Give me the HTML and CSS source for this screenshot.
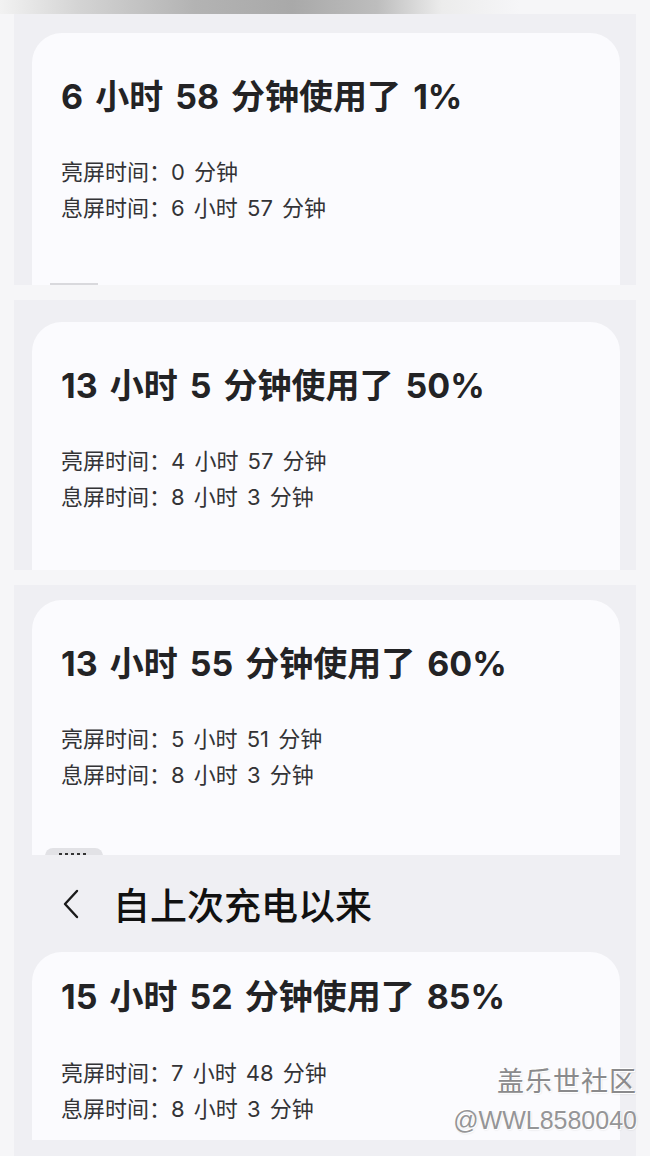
FILE: index.html
```html
<!DOCTYPE html>
<html lang="zh-CN">
<head>
    <meta charset="UTF-8">
    <meta name="viewport" content="width=device-width, initial-scale=1.0">
    <title>电池使用情况</title>
    <link rel="stylesheet" href="styles.css">
</head>
<body>
    <div class="top-blur"></div>

    <!-- Ảnh 1 -->
    <div class="shot shot-1">
        <div class="card">
            <h2 class="usage-title">6 小时 58 分钟使用了 1%</h2>
            <p class="usage-line">亮屏时间：0 分钟</p>
            <p class="usage-line">息屏时间：6 小时 57 分钟</p>
        </div>
        <span class="tab-line"></span>
    </div>

    <div class="shot shot-2">
        <div class="card">
            <h2 class="usage-title">13 小时 5 分钟使用了 50%</h2>
            <p class="usage-line">亮屏时间：4 小时 57 分钟</p>
            <p class="usage-line">息屏时间：8 小时 3 分钟</p>
        </div>
    </div>

    <div class="shot shot-3">
        <div class="card">
            <h2 class="usage-title">13 小时 55 分钟使用了 60%</h2>
            <p class="usage-line">亮屏时间：5 小时 51 分钟</p>
            <p class="usage-line">息屏时间：8 小时 3 分钟</p>
        </div>
        <span class="tab-pill"><span class="tab-marks"></span></span>
    </div>

    <div class="shot shot-4">
        <div class="page-header">
            <svg class="back-icon" width="18" height="30" viewBox="0 0 18 30">
                <polyline points="15,2 3,15 15,28" fill="none" stroke="#1a1a1a" stroke-width="2.4" stroke-linecap="round" stroke-linejoin="round"/>
            </svg>
            <span class="page-title">自上次充电以来</span>
        </div>
        <div class="card">
            <h2 class="usage-title">15 小时 52 分钟使用了 85%</h2>
            <p class="usage-line">亮屏时间：7 小时 48 分钟</p>
            <p class="usage-line">息屏时间：8 小时 3 分钟</p>
        </div>
    </div>

    <div class="watermark">
        <div class="wm-name">盖乐世社区</div>
        <div class="wm-user">@WWL8580040</div>
    </div>
</body>
</html>
```

FILE: styles.css
```css
body {
    margin: 0;
    background-color: #f6f6f8;
    font-family: Inter, "Noto Sans CJK SC", sans-serif;
    color: #1f1f21;
    position: relative;
}
.top-blur {
    height: 14px;
    background: linear-gradient(to right, #f2f2f2 0, #d4d4d4 12%, #b3b3b3 30%, #a9a9a9 45%, #bdbdbd 58%, #ececec 68%, #f6f6f8 80%);
}
/* mỗi ảnh chụp màn hình */
.shot {
    position: relative;
    margin: 0 14px;
    padding: 0 16px 0 18px;
    background-color: #efeff3;
    overflow: hidden;
}
.shot-1 { height: 271px; padding-top: 19px; box-sizing: border-box; margin-bottom: 15px; }
.shot-2 { height: 270px; padding-top: 22px; box-sizing: border-box; margin-bottom: 15px; }
.shot-3 { height: 270px; padding-top: 15px; box-sizing: border-box; }
.shot-4 { height: 301px; box-sizing: border-box; }

.card {
    background-color: #fbfbfe;
    border-radius: 30px 30px 0 0;
    padding: 44px 20px 0 29px;
    height: 100%;
    box-sizing: border-box;
}
.shot-4 .card {
    height: 188px;
    padding-top: 25px;
}
.usage-title {
    margin: 0 0 37px;
    font-size: 34px;
    line-height: 40px;
    font-weight: 700;
    word-spacing: 4px;
    color: #232325;
}
.shot-4 .usage-title {
    margin-bottom: 38px;
}
.usage-line {
    margin: 0;
    font-size: 22px;
    line-height: 36px;
    word-spacing: 3px;
    color: #333336;
}
.tab-line {
    position: absolute;
    left: 36px;
    bottom: 0;
    width: 48px;
    height: 2px;
    background-color: #d9d9dd;
}
.tab-pill {
    position: absolute;
    left: 31px;
    top: 263px;
    width: 58px;
    height: 16px;
    border-radius: 8px;
    background-color: #e2e2e6;
}
.tab-marks {
    position: absolute;
    left: 14px;
    top: 5px;
    width: 30px;
    height: 2px;
    background: repeating-linear-gradient(to right, #333 0, #333 3px, transparent 3px, transparent 6px);
}
.page-header {
    display: flex;
    align-items: center;
    height: 97px;
    padding-left: 30px;
}
.back-icon {
    flex: none;
}
.page-title {
    margin-left: 33px;
    font-size: 37px;
    font-weight: 500;
    color: #111;
}
.watermark {
    position: absolute;
    right: 13px;
    top: 1064px;
    text-align: right;
    color: #8a8a8c;
    text-shadow: 1px 1px 0 #fff, -1px -1px 0 #fff, 1px 1px 2px rgba(0, 0, 0, 0.15);
}
.wm-name {
    font-size: 27px;
    line-height: 36px;
    letter-spacing: 1px;
}
.wm-user {
    font-family: "Liberation Sans", sans-serif;
    font-size: 25px;
    line-height: 40px;
    color: #959597;
}
```
